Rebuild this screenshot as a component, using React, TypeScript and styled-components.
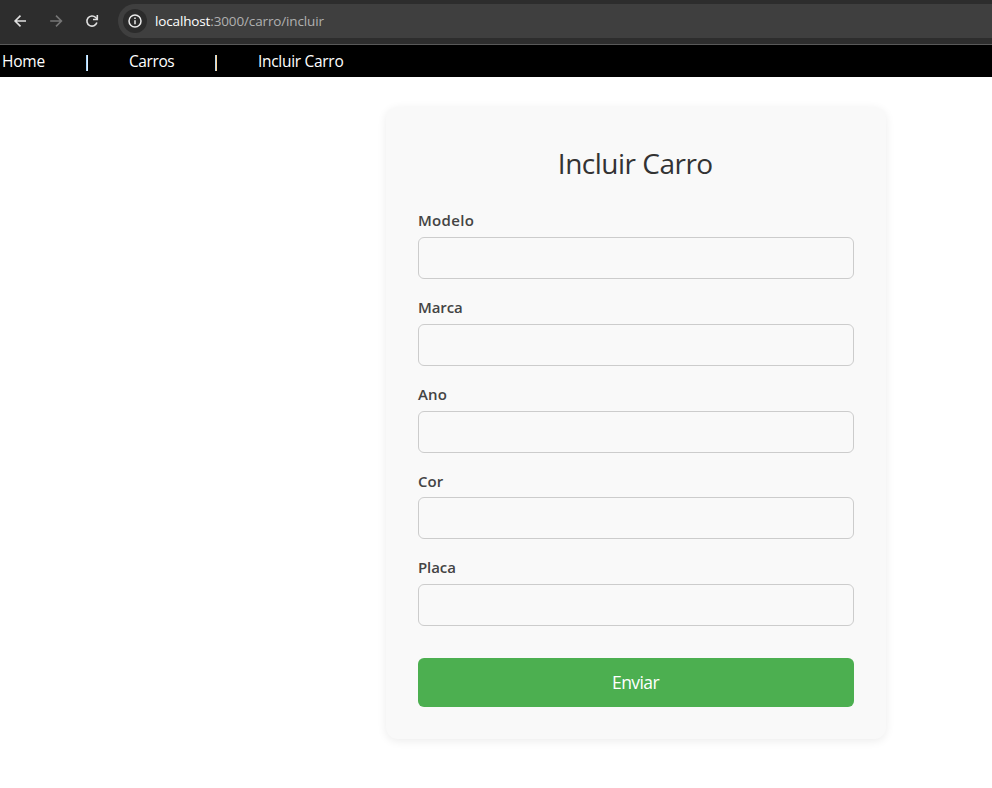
import React from "react";
import styled, { createGlobalStyle } from "styled-components";

const GlobalStyle = createGlobalStyle`
  *, *::before, *::after { box-sizing: border-box; }
  html, body { margin: 0; height: 100%; background: #fff; }
  body { overflow: hidden; font-family: "Segoe UI", "Open Sans", "Noto Sans", sans-serif; font-size: 15.5px; }
`;

const BrowserBar = styled.header`
  display: flex;
  height: 45px;
  padding: 4px 0 0 10px;
  background: #2d2d2d;
  border-bottom: 1px solid #595959;
`;

const BarButton = styled.div<{ $dim?: boolean }>`
  width: 20px;
  height: 34px;
  margin-right: 16px;
  display: flex;
  align-items: center;
  justify-content: center;
  color: ${(p) => (p.$dim ? "#767676" : "#e0e0e0")};
`;

const AddressBar = styled.div`
  flex: 1;
  display: flex;
  align-items: center;
  height: 34px;
  padding-left: 5px;
  border-radius: 17px 0 0 17px;
  background: #3f3f3f;
`;

const SiteInfo = styled.div`
  width: 24px;
  height: 24px;
  margin-right: 8px;
  border-radius: 50%;
  background: #2b2b2b;
  color: #ececec;
  display: flex;
  align-items: center;
  justify-content: center;
`;

const Url = styled.div`
  font-size: 13.5px;
  line-height: 18px;
  letter-spacing: -0.14px;
  white-space: nowrap;
  color: #b0b0b0;
`;

const Host = styled.span`
  color: #fff;
`;

const Nav = styled.nav`
  display: flex;
  align-items: center;
  height: 32px;
  padding-left: 2px;
  background: #000;
`;

const NavLink = styled.a<{ $width: number; $spacing: number }>`
  width: ${(p) => p.$width}px;
  letter-spacing: ${(p) => p.$spacing}px;
  line-height: 22px;
  padding-bottom: 1px;
  color: #fff;
  white-space: nowrap;
  text-decoration: none;
`;

const Divider = styled.span<{ $left: string; $right: string }>`
  width: 2px;
  height: 16px;
  margin: 3px 41px 0 0;
  background: linear-gradient(90deg, ${(p) => p.$left} 50%, ${(p) => p.$right} 50%);
`;

const Card = styled.form`
  width: 500px;
  height: 632px;
  margin: 30px 0 0 386px;
  padding: 32px;
  border-radius: 12px;
  background: #f9f9f9;
  box-shadow: 0 2px 10px rgba(0, 0, 0, 0.08);
`;

const Title = styled.h2`
  height: 47px;
  margin: 0 0 23.45px;
  padding: 1px 1.5px 0 0;
  font-size: 28px;
  line-height: 47px;
  font-weight: 400;
  letter-spacing: -0.5px;
  text-align: center;
  color: #333;
`;

const Field = styled.div`
  height: 86.7px;
`;

const Label = styled.label<{ $spacing: number }>`
  display: block;
  height: 27.75px;
  font-size: 15px;
  line-height: 22px;
  font-weight: 600;
  letter-spacing: ${(p) => p.$spacing}px;
  color: #444;
`;

const Input = styled.input`
  display: block;
  width: 100%;
  height: 42px;
  padding: 0 12px;
  border: 1px solid #ccc;
  border-radius: 6px;
  background: transparent;
  font: inherit;
  outline: none;
`;

const Submit = styled.button`
  display: block;
  width: 100%;
  height: 49px;
  margin-top: 15.05px;
  padding: 0 1px 1px 0;
  border: 0;
  border-radius: 6px;
  background: #4caf50;
  color: #fff;
  font: inherit;
  font-size: 17.5px;
  letter-spacing: -0.6px;
`;

const fields = [
  { id: "modelo", label: "Modelo", spacing: 0.3 },
  { id: "marca", label: "Marca", spacing: -0.1 },
  { id: "ano", label: "Ano", spacing: 0.1 },
  { id: "cor", label: "Cor", spacing: 0 },
  { id: "placa", label: "Placa", spacing: -0.1 },
];

const Arrow = ({ right }: { right?: boolean }) => (
  <svg width="14" height="14" viewBox="0 0 14 14" fill="none" stroke="currentColor" strokeWidth="1.6">
    <path d={right ? "M1.2 7H12M7 1.6L12.4 7L7 12.4" : "M13 7H2.2M7.5 1.6L2.1 7L7.5 12.4"} />
  </svg>
);

const Reload = () => (
  <svg width="14" height="14" viewBox="0 0 14 14" fill="none" stroke="currentColor" strokeWidth="1.6">
    <path d="M11.9 8.6A5.1 5.1 0 1 1 10.7 3.5L12.2 5" />
    <path d="M12.3 1V5.5H8" />
  </svg>
);

const Info = () => (
  <svg width="14" height="14" viewBox="0 0 14 14" fill="none" stroke="currentColor" strokeWidth="1.5">
    <circle cx="7" cy="7" r="6" />
    <path d="M7 6.2V10.2M7 3.6V5" />
  </svg>
);

export default function App() {
  return (
    <>
      <GlobalStyle />
      <BrowserBar>
        <BarButton><Arrow /></BarButton>
        <BarButton $dim><Arrow right /></BarButton>
        <BarButton><Reload /></BarButton>
        <AddressBar>
          <SiteInfo><Info /></SiteInfo>
          <Url><Host>localhost</Host>:3000/carro/incluir</Url>
        </AddressBar>
      </BrowserBar>
      <Nav>
        <NavLink $width={84} $spacing={-0.2}>Home</NavLink>
        <Divider $left="#a4d4fb" $right="#dceeff" />
        <NavLink $width={86} $spacing={-0.4}>Carros</NavLink>
        <Divider $left="#b4d6f0" $right="#ffd494" />
        <NavLink $width={100} $spacing={-0.3}>Incluir Carro</NavLink>
      </Nav>
      <main>
        <Card>
          <Title>Incluir Carro</Title>
          {fields.map((f) => (
            <Field key={f.id}>
              <Label htmlFor={f.id} $spacing={f.spacing}>{f.label}</Label>
              <Input id={f.id} />
            </Field>
          ))}
          <Submit type="button">Enviar</Submit>
        </Card>
      </main>
    </>
  );
}
